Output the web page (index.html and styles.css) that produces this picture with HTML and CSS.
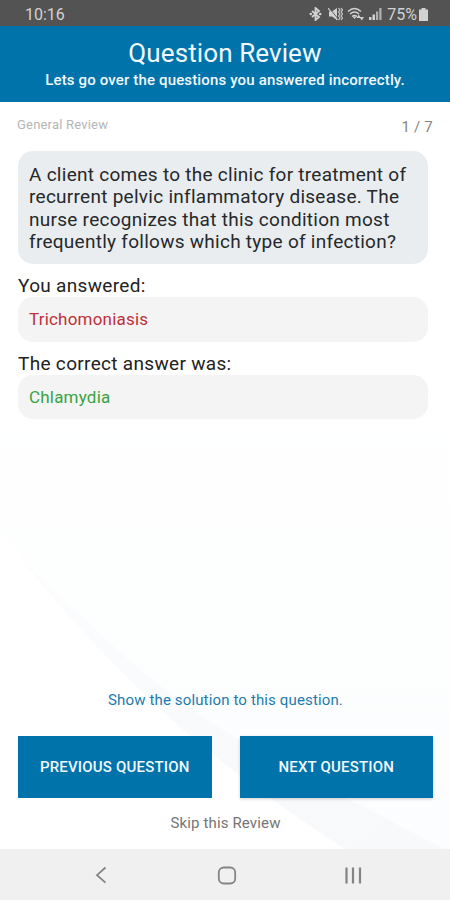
FILE: index.html
```html
<!DOCTYPE html>
<html lang="en">
<head>
    <meta charset="UTF-8">
    <meta name="viewport" content="width=device-width, initial-scale=1.0">
    <title>Question Review</title>
    <link rel="stylesheet" href="styles.css">
</head>
<body>

<div class="status-bar">
    <span class="time">10:16</span>
    <div class="status-icons">
        <svg class="bluetooth" width="13" height="14" viewBox="0 0 13 14">
            <path d="M3 4l7 6-3.500 3V1L10 4l-7 6" fill="none" stroke="currentColor" stroke-width="1.800"/>
            <circle cx="1.800" cy="7" r="1.300" fill="currentColor"/>
            <circle cx="11.200" cy="7" r="1.300" fill="currentColor"/>
        </svg>
        <svg class="mute" width="15" height="14" viewBox="0 0 15 14">
            <path d="M1 4.500h3L9 1v12L4 9.500H1z" fill="currentColor"/>
            <path d="M2 2l8 10" stroke="#535353" stroke-width="1"/>
            <path d="M0 1l9.500 12" stroke="currentColor" stroke-width="1.200"/>
            <path d="M10.500 1l1.500 2-1.500 2 1.500 2-1.500 2 1.500 2-1.500 2M13 1l1.500 2-1.500 2 1.500 2-1.500 2 1.500 2-1.500 2" fill="none" stroke="currentColor" stroke-width="1.100"/>
        </svg>
        <svg class="wifi" width="18" height="14" viewBox="0 0 18 14">
            <path d="M1 4.500q6.500-6 13 0M3 7q4.500-4 9 0M5 9.500q2.500-2 5 0" fill="none" stroke="currentColor" stroke-width="1.500"/>
            <path d="M5.500 9.500h4l-2 2.500zM9.500 11l2.200-3.500L14 11zM12.500 10H17l-2.200 3.500z" fill="currentColor"/>
        </svg>
        <svg class="signal" width="13" height="14" viewBox="0 0 13 14">
            <path d="M0 10h2.500v3H0zM3.500 7.500H6V13H3.500z" fill="currentColor"/>
            <path d="M7 4.500h2.200V13H7zM10.300 1h2.200v12h-2.200z" fill="currentColor" opacity=".75"/>
        </svg>
        <span class="battery-level">75%</span>
        <svg class="battery" width="9" height="13" viewBox="0 0 9 13">
            <path d="M2.500 0h4v1.500H9V13H0V1.500h2.500z" fill="currentColor"/>
        </svg>
    </div>
</div>

<header class="header">
    <h1>Question Review</h1>
    <p>Lets go over the questions you answered incorrectly.</p>
</header>

<main class="review">
    <svg class="swoosh" viewBox="0 0 450 747" preserveAspectRatio="none">
        <defs>
            <linearGradient id="haze" x1="0" y1="0" x2="0" y2="1">
                <stop offset="0" stop-color="#fff"/>
                <stop offset="1" stop-color="#fcfdfe"/>
            </linearGradient>
            <linearGradient id="band" x1="0" y1="0" x2="1" y2="1">
                <stop offset="0" stop-color="#fdfdfe"/>
                <stop offset=".4" stop-color="#f8fafb"/>
                <stop offset="1" stop-color="#f7f9fa"/>
            </linearGradient>
        </defs>
        <path d="M0 200V428Q40 480 80 525Q180 640 345 747H450V200z" fill="url(#haze)"/>
        <path d="M18 453Q60 495 120 550Q205 628 350 698L445 747H345Q245 682 180 625Q90 545 18 453z" fill="url(#band)"/>
    </svg>

    <div class="meta">
        <span class="category">General Review</span>
        <span class="counter">1 / 7</span>
    </div>

    <div class="question">A client comes to the clinic for treatment of recurrent pelvic inflammatory disease. The nurse recognizes that this condition most frequently follows which type of infection?</div>

    <div class="answer-label">You answered:</div>
    <div class="answer wrong">Trichomoniasis</div>

    <div class="answer-label">The correct answer was:</div>
    <div class="answer correct">Chlamydia</div>

    <div class="actions">
        <a class="solution">Show the solution to this question.</a>
        <div class="buttons">
            <button type="button" class="previous">Previous question</button>
            <button type="button" class="next">Next question</button>
        </div>
        <a class="skip">Skip this Review</a>
    </div>
</main>

<nav class="nav-bar">
    <svg width="20" height="20" viewBox="0 0 20 20">
        <path d="M14.500 2.500L6 10.200l8.500 7.500" fill="none" stroke="currentColor" stroke-width="1.800"/>
    </svg>
    <svg width="20" height="20" viewBox="0 0 20 20">
        <rect x="1.800" y="2.500" width="16.400" height="16" rx="5" fill="none" stroke="currentColor" stroke-width="1.800"/>
    </svg>
    <svg width="20" height="20" viewBox="0 0 20 20">
        <path d="M3.500 2.500v16M10 2.500v16M17 2.500v16" stroke="currentColor" stroke-width="2.200"/>
    </svg>
</nav>

</body>
</html>
```
FILE: styles.css
```css
* {
    box-sizing: border-box;
}
body {
    font-family: Roboto, 'Liberation Sans', sans-serif;
    margin: 0;
    height: 100vh;
    display: flex;
    flex-direction: column;
    background: #fff;
    overflow: hidden;
}
.status-bar {
    height: 26px;
    padding: 2px 22px 0 25px;
    display: flex;
    justify-content: space-between;
    align-items: center;
    background: #535353;
    color: #d2d2d2;
    font-size: 16px;
}
.status-icons {
    display: flex;
    align-items: center;
}
.mute {
    margin-left: 6px;
}
.wifi {
    margin-left: 4px;
}
.signal {
    margin-left: 4px;
}
.battery-level {
    margin-left: 5px;
}
.battery {
    margin-left: 2px;
}
.header {
    height: 76px;
    padding-top: 11px;
    background: #0073ab;
    color: #f2f8fc;
    text-align: center;
}
.header h1 {
    margin: 0;
    font-size: 26px;
    font-weight: 400;
    line-height: 32px;
    letter-spacing: 0.1px;
}
.header p {
    margin: 2px 0 0;
    font-size: 15px;
    font-weight: 500;
    line-height: 18px;
    letter-spacing: 0.15px;
}
.review {
    flex: 1;
    position: relative;
    display: flex;
    flex-direction: column;
    padding: 13px 17px 0 18px;
}
.swoosh {
    position: absolute;
    top: 0;
    left: 0;
    width: 100%;
    height: 100%;
    z-index: -1;
}
.meta {
    height: 36px;
    display: flex;
    justify-content: space-between;
    margin-left: -1px;
}
.category {
    color: #b5b5b5;
    font-size: 13px;
    line-height: 20px;
    letter-spacing: 0.2px;
}
.counter {
    color: #858585;
    font-size: 15px;
    line-height: 24px;
    letter-spacing: 0.2px;
}
.question {
    width: 410px;
    height: 113px;
    padding: 13px 11px 11px;
    border-radius: 15px;
    background: #e9edf0;
    color: #26282a;
    font-size: 19px;
    line-height: 22.3px;
    letter-spacing: 0.27px;
}
.answer-label {
    margin-top: 11px;
    color: #222;
    font-size: 19px;
    line-height: 22px;
    letter-spacing: 0.32px;
}
.answer {
    width: 410px;
    height: 44.5px;
    padding-left: 11px;
    border-radius: 15px;
    background: #f4f4f4;
    font-size: 17px;
    line-height: 45px;
    letter-spacing: 0.2px;
}
.wrong {
    color: #bd3039;
}
.correct {
    color: #38a340;
}
.actions {
    margin-top: auto;
    height: 159px;
    display: flex;
    flex-direction: column;
    align-items: center;
}
.solution {
    color: #1c7cae;
    font-size: 15px;
    line-height: 20px;
    letter-spacing: 0.14px;
}
.buttons {
    width: 100%;
    margin-top: 26px;
    display: grid;
    grid-template-columns: 1fr 1fr;
    gap: 28px;
}
.buttons button {
    height: 62px;
    padding: 0;
    border: none;
    background: #0073ab;
    color: #f2f8fc;
    font-family: inherit;
    font-size: 15px;
    font-weight: 500;
    letter-spacing: 0.18px;
    text-transform: uppercase;
}
.buttons .next {
    box-shadow: 0 1px 3px rgba(0, 0, 0, 0.2);
}
.skip {
    margin-top: 15px;
    color: #757575;
    font-size: 15px;
    line-height: 20px;
    letter-spacing: 0.15px;
}
.nav-bar {
    height: 51px;
    padding: 0 87px 0 91px;
    display: flex;
    justify-content: space-between;
    align-items: center;
    background: #f0f0f0;
    color: #848484;
}
```
